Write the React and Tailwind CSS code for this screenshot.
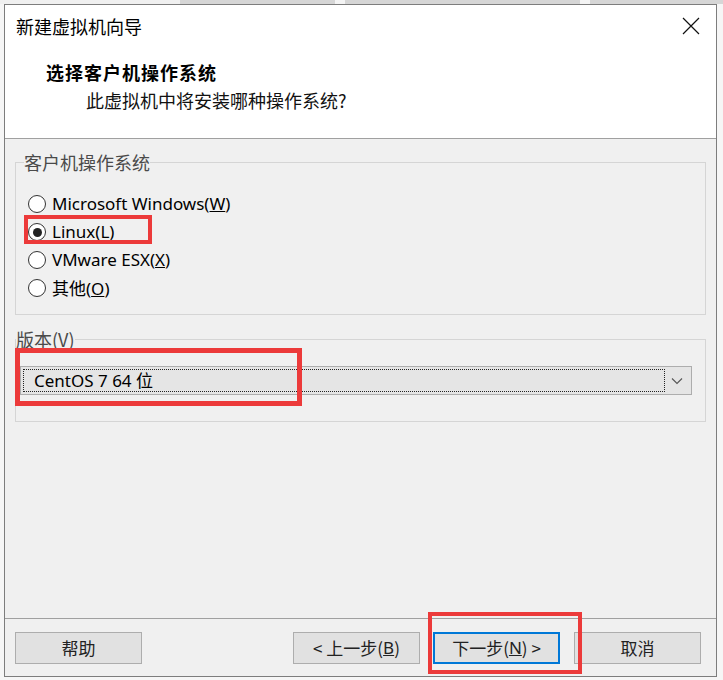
import React from "react";

const CJK = { fontFamily: '"Noto Sans CJK SC", "Noto Sans", sans-serif' };
const UI = { fontFamily: '"Noto Sans", "Noto Sans CJK SC", sans-serif' };

function Radio({ checked, children }) {
  return (
    <div className="flex items-center h-[28px]">
      <div className="w-[18px] h-[18px] rounded-full border border-[#333] bg-white flex items-center justify-center">
        {checked && <div className="w-[9px] h-[9px] rounded-full bg-[#222]" />}
      </div>
      <span className="ml-[6px] text-[17px] text-black leading-[24px]" style={UI}>
        {children}
      </span>
    </div>
  );
}

function Btn({ children, primary }) {
  return (
    <div
      className={
        "w-[127px] h-[32px] flex items-center justify-center text-[17px] text-[#222] bg-[#e1e1e1] " +
        (primary ? "border-2 border-[#0078d7]" : "border border-[#adadad]")
      }
      style={CJK}
    >
      {children}
    </div>
  );
}

export default function App() {
  return (
    <div className="relative w-[723px] h-[680px] bg-[#f6f6f6] overflow-hidden">
      {/* top strip */}
      <div className="h-[4px] flex">
        <div className="w-[180px] bg-[#f0f0f0]" />
        <div className="w-[155px] bg-[#d6d6d6]" />
        <div className="w-[10px] bg-[#f4f4f4]" />
        <div className="w-[235px] bg-[#d6d6d6]" />
        <div className="w-[10px] bg-[#f4f4f4]" />
        <div className="flex-1 bg-[#d6d6d6]" />
      </div>
      <div className="flex">
        <div className="w-[4px]" />
        <div className="w-[713px] h-[673px] border border-[#7d7d7d] flex flex-col bg-[#f0f0f0]">
          {/* header */}
          <div className="h-[134px] bg-white border-b border-[#a0a0a0] flex flex-col">
            <div className="flex items-center justify-between pt-[7px] pl-[11px] pr-[16px]">
              <span className="text-[18px] leading-[28px] text-black" style={CJK}>新建虚拟机向导</span>
              <svg width="18" height="18" viewBox="0 0 18 18">
                <path d="M1 1 L17 17 M17 1 L1 17" stroke="#111" strokeWidth="1.2" fill="none" />
              </svg>
            </div>
            <div className="mt-[20px] pl-[41px] text-[18px] leading-[24px] font-bold text-black tracking-[1px]" style={CJK}>
              选择客户机操作系统
            </div>
            <div className="mt-[4px] pl-[81px] text-[18px] leading-[24px] text-[#111]" style={CJK}>
              此虚拟机中将安装哪种操作系统?
            </div>
          </div>
          {/* body */}
          <div className="flex-1 flex flex-col px-[10px]">
            <fieldset className="mt-[11px] border border-[#d5d5d5] pl-[12px] pt-[16px] pb-[12px]">
              <legend className="ml-[-4px] px-[0px] text-[18px] leading-[24px] text-[#4a4a4a]" style={CJK}>
                客户机操作系统
              </legend>
              <Radio>
                Microsoft Windows(<u>W</u>)
              </Radio>
              <Radio checked>Linux(L)</Radio>
              <Radio>
                VMware ESX(<u>X</u>)
              </Radio>
              <Radio>
                <span style={CJK}>其他</span>(<u>O</u>)
              </Radio>
            </fieldset>
            <fieldset className="mt-[12px] border border-[#d5d5d5] pl-[4px] pr-[13px] pt-[15px] pb-[26px]">
              <legend className="ml-[-4px] px-[0px] text-[18px] leading-[24px] text-[#4a4a4a]" style={CJK}>
                版本(V)
              </legend>
              <div className="h-[29px] bg-[#e5e5e5] border border-[#adadad] flex items-center p-[2px]">
                <div className="flex-1 h-full border border-dotted border-[#222] flex items-center pl-[10px]">
                  <span className="text-[17px] text-black" style={UI}>
                    CentOS 7 64 <span style={CJK}>位</span>
                  </span>
                </div>
                <div className="w-[24px] flex items-center justify-center">
                  <svg width="12" height="8" viewBox="0 0 12 8">
                    <path d="M1 1.5 L6 6.5 L11 1.5" stroke="#555" strokeWidth="1.1" fill="none" />
                  </svg>
                </div>
              </div>
            </fieldset>
            <div className="flex-1" />
          </div>
          <div className="border-t border-[#a0a0a0] pt-[13px] pb-[12px] flex items-center pl-[10px] pr-[15px]">
            <Btn>帮助</Btn>
            <div className="flex-1" />
            <Btn>
              &lt; 上一步(<u style={UI}>B</u>)
            </Btn>
            <div className="w-[13px]" />
            <Btn primary>
              下一步(<u style={UI}>N</u>) &gt;
            </Btn>
            <div className="w-[14px]" />
            <Btn>取消</Btn>
          </div>
        </div>
      </div>
      {/* annotation overlays */}
      <div className="absolute left-[24px] top-[215px] w-[128px] h-[29px] border-[4px] border-[#ec3a3a]" />
      <div className="absolute left-[15px] top-[348px] w-[287px] h-[58px] border-[5px] border-[#ec3a3a]" />
      <div className="absolute left-[428px] top-[612px] w-[154px] h-[62px] border-[4px] border-[#ec3a3a]" />
    </div>
  );
}
